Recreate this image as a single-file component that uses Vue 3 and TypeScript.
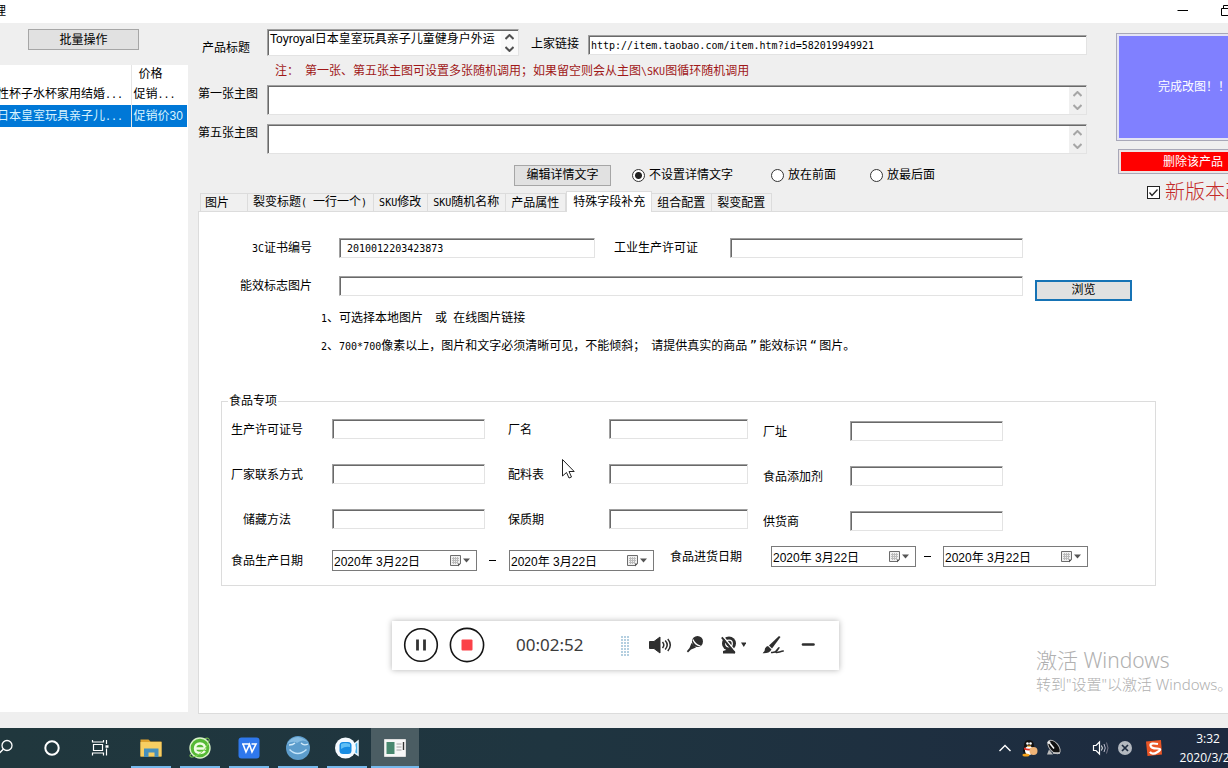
<script setup lang="ts">
import { ref } from 'vue'

interface Product { name: string; price: string }
interface Part { t: string; hw?: boolean }
interface Field { id: string; label: string }

const products: Product[] = [
  { name: '性杯子水杯家用结婚', price: '促销...' },
  { name: '日本皇室玩具亲子儿', price: '促销价30' },
]
const selectedRow = ref(1)

const title = ref('Toyroyal日本皇室玩具亲子儿童健身户外运')
const link = ref('http://item.taobao.com/item.htm?id=582019949921')
const firstImage = ref('')
const fifthImage = ref('')

const placements = ['不设置详情文字', '放在前面', '放最后面']
const placement = ref(0)
const newVersion = ref(true)

const tabs: Part[][] = [
  [{ t: '图片' }],
  [{ t: '裂变标题' }, { t: '( ', hw: true }, { t: '一行一个' }, { t: ')', hw: true }],
  [{ t: 'SKU', hw: true }, { t: '修改' }],
  [{ t: 'SKU', hw: true }, { t: '随机名称' }],
  [{ t: '产品属性' }],
  [{ t: '特殊字段补充' }],
  [{ t: '组合配置' }],
  [{ t: '裂变配置' }],
]
const activeTab = ref(5)

const certificate = ref('2010012203423873')

const foodColumns: Field[][] = [
  [
    { id: 'permit', label: '生产许可证号' },
    { id: 'contact', label: '厂家联系方式' },
    { id: 'storage', label: '储藏方法' },
  ],
  [
    { id: 'factory', label: '厂名' },
    { id: 'recipe', label: '配料表' },
    { id: 'shelf', label: '保质期' },
  ],
  [
    { id: 'address', label: '厂址' },
    { id: 'additive', label: '食品添加剂' },
    { id: 'supplier', label: '供货商' },
  ],
]
const dateGroups = [
  { id: 'produced', label: '食品生产日期' },
  { id: 'stocked', label: '食品进货日期' },
]
const today = '2020年 3月22日'
</script>

<template>
  <div class="screen">
    <header class="titlebar">
      <span class="caption">理</span>
      <div class="window-buttons">
        <button type="button" aria-label="最小化">
          <svg width="12" height="12"><path d="M0.5 6.5H11" stroke="#000" fill="none" /></svg>
        </button>
        <button type="button" aria-label="还原">
          <svg width="12" height="12"><path d="M0.5 4.5h8v7h-8zM2.5 4.5v-3h8v7h-2" stroke="#000" fill="none" /></svg>
        </button>
      </div>
    </header>

    <main class="body">
      <aside class="left">
        <button type="button" class="btn batch">批量操作</button>
        <div class="list">
          <table>
            <thead>
              <tr><th></th><th class="price-head">价格</th></tr>
            </thead>
            <tbody>
              <tr v-for="(p, i) in products" :key="i" :class="{ selected: i === selectedRow }" @click="selectedRow = i">
                <td>{{ p.name }}<span class="hw">...</span></td>
                <td v-if="i === 0">促销<span class="hw">...</span></td>
                <td v-else>{{ p.price }}</td>
              </tr>
            </tbody>
          </table>
        </div>
      </aside>

      <section class="right">
        <div class="top">
          <form class="head-form" @submit.prevent>
            <div class="row first-row">
              <label class="lead low" for="title">产品标题</label>
              <div class="memo short">
                <textarea id="title" v-model="title" rows="1" wrap="off"></textarea>
                <div class="spin active">
                  <button type="button" aria-label="向上"><svg width="9" height="6"><path d="M0.5 5L4.5 1L8.5 5" /></svg></button>
                  <button type="button" aria-label="向下"><svg width="9" height="6"><path d="M0.5 1L4.5 5L8.5 1" /></svg></button>
                </div>
              </div>
              <label class="link-label" for="link">上家链接</label>
              <input id="link" v-model="link" class="field mono grow" type="text" />
            </div>
            <p class="notice">注：<span class="hw">&nbsp;</span>第一张、第五张主图可设置多张随机调用；如果留空则会从主图<span class="hw">\SKU</span>图循环随机调用</p>
            <div class="row memo-row">
              <label class="lead" for="img1">第一张主图</label>
              <div class="memo grow">
                <textarea id="img1" v-model="firstImage"></textarea>
                <div class="spin">
                  <button type="button" aria-label="向上"><svg width="9" height="6"><path d="M0.5 5L4.5 1L8.5 5" /></svg></button>
                  <button type="button" aria-label="向下"><svg width="9" height="6"><path d="M0.5 1L4.5 5L8.5 1" /></svg></button>
                </div>
              </div>
            </div>
            <div class="row memo-row">
              <label class="lead" for="img5">第五张主图</label>
              <div class="memo grow">
                <textarea id="img5" v-model="fifthImage"></textarea>
                <div class="spin">
                  <button type="button" aria-label="向上"><svg width="9" height="6"><path d="M0.5 5L4.5 1L8.5 5" /></svg></button>
                  <button type="button" aria-label="向下"><svg width="9" height="6"><path d="M0.5 1L4.5 5L8.5 1" /></svg></button>
                </div>
              </div>
            </div>
            <div class="row detail-row">
              <button type="button" class="btn edit">编辑详情文字</button>
              <label v-for="(p, i) in placements" :key="p" class="radio">
                <input v-model="placement" type="radio" name="placement" :value="i" />{{ p }}
              </label>
            </div>
          </form>

          <div class="side">
            <button type="button" class="big finish">完成改图！！</button>
            <button type="button" class="big remove">删除该产品</button>
            <label class="version">
              <input v-model="newVersion" type="checkbox" />
              <svg v-if="newVersion" class="tick" width="13" height="13"><path d="M2.5 6.5L5 9.500L10.500 3.500" stroke="#222" stroke-width="1.3" fill="none" /></svg>
              <span>新版本改图</span>
            </label>
          </div>
        </div>

        <div class="tabs" role="tablist">
          <button
            v-for="(tab, i) in tabs" :key="i" type="button" role="tab"
            :aria-selected="i === activeTab" :class="{ current: i === activeTab }" @click="activeTab = i"
          ><span v-for="(part, j) in tab" :key="j" :class="{ hw: part.hw }">{{ part.t }}</span></button>
        </div>

        <div class="panel" role="tabpanel">
          <div class="upper">
            <div class="fields">
              <label for="ccc"><span class="hw">3C</span>证书编号</label>
              <input id="ccc" v-model="certificate" class="field mono indent" type="text" />
              <label class="mid" for="industry">工业生产许可证</label>
              <input id="industry" class="field" type="text" />
              <label for="energy">能效标志图片</label>
              <input id="energy" class="field wide" type="text" />
            </div>
            <button type="button" class="btn browse">浏览</button>
          </div>
          <div class="notes">
            <p><span class="hw">1</span>、可选择本地图片<span class="hw">&nbsp; </span>或<span class="hw">&nbsp;</span>在线图片链接</p>
            <p><span class="hw">2</span>、<span class="hw">700*700</span>像素以上，图片和文字必须清晰可见，不能倾斜；<span class="hw">&nbsp;</span>请提供真实的商品<span class="hw quote">”</span>能效标识<span class="hw quote">“</span>图片。</p>
          </div>

          <fieldset class="food">
            <legend>食品专项</legend>
            <div class="columns">
              <div v-for="(column, c) in foodColumns" :key="c" class="column" :class="'column-' + c">
                <template v-for="f in column" :key="f.id">
                  <label :for="f.id">{{ f.label }}</label>
                  <input :id="f.id" class="field" type="text" />
                </template>
              </div>
            </div>
            <div class="dates">
              <div v-for="g in dateGroups" :key="g.id" class="date-group" :class="g.id">
                <label :for="g.id">{{ g.label }}</label>
                <template v-for="n in 2" :key="n">
                  <span v-if="n === 2" class="dash"></span>
                  <div class="date">
                    <input :id="n === 1 ? g.id : g.id + '-end'" type="text" :value="today" :aria-label="g.label" readonly />
                    <button type="button" aria-label="选择日期">
                      <svg width="22" height="13" viewBox="0 0 22 13">
                        <path d="M1.500 1.500h10v8l-2 2h-8z" fill="#f0f0f0" stroke="#6c6c6c" />
                        <path d="M3 4.500h7M3 6.500h7M3 8.500h6M4.500 3v7M6.500 3v7M8.500 3v7" stroke="#bbb" fill="none" />
                        <path d="M9 12.500V9.500H12z" fill="#555" />
                        <path d="M14 4.500h7l-3.500 4z" fill="#555" />
                      </svg>
                    </button>
                  </div>
                </template>
              </div>
            </div>
          </fieldset>
        </div>
      </section>
    </main>

    <div class="watermark">
      <strong>激活 Windows</strong>
      <span>转到"设置"以激活 Windows。</span>
    </div>

    <svg class="pointer" width="13" height="20" viewBox="0 0 13 20">
      <path d="M0.500 0.500V17L4.500 13.500L7 19L9.500 18L7 12.500H12.200Z" fill="#fff" stroke="#222" />
    </svg>

    <div class="recorder">
      <button type="button" aria-label="暂停">
        <svg width="36" height="36" viewBox="0 0 36 36"><circle cx="18" cy="18" r="16.300" fill="#fff" stroke="#151515" stroke-width="1.600" /><path d="M14.500 12.500v11M21.500 12.500v11" stroke="#333" stroke-width="2.800" /></svg>
      </button>
      <button type="button" class="stop" aria-label="停止">
        <svg width="36" height="36" viewBox="0 0 36 36"><circle cx="18" cy="18" r="16.600" fill="#fff" stroke="#151515" stroke-width="1.600" /><rect x="12.500" y="12.500" width="11" height="11" rx="1" fill="#fb4148" /></svg>
      </button>
      <time>00:02:52</time>
      <span class="grip"></span>
      <button type="button" class="tool" aria-label="声音">
        <svg width="24" height="20" viewBox="0 0 24 20"><path d="M1.500 6.500H6L12 2v16L6 13.500H1.500z" fill="#2e2e2e" stroke="#2e2e2e" stroke-linejoin="round" /><path d="M14.500 7q2.600 3 0 6M17.200 5.500q4 4.500 0 9M19.800 4q5 6 0 12" fill="none" stroke="#2e2e2e" stroke-width="1.500" /></svg>
      </button>
      <button type="button" class="tool mic" aria-label="麦克风">
        <svg width="18" height="20" viewBox="0 0 18 20"><circle cx="11.500" cy="6.500" r="5.500" fill="#2e2e2e" /><path d="M7 4.500q1.500 5 7.500 6.500" fill="none" stroke="#fff" stroke-width="1.200" /><path d="M5.500 8L10 12.500L5 14.500L2 17.500L0.800 16.300L3.500 13z" fill="#2e2e2e" /></svg>
      </button>
      <button type="button" class="tool cam" aria-label="摄像头">
        <svg width="26" height="20" viewBox="0 0 26 20"><circle cx="9" cy="8.500" r="7" fill="#2e2e2e" /><circle cx="9" cy="8.500" r="3.300" fill="none" stroke="#fff" stroke-width="1.300" /><path d="M3 16q6-3 12 0v2.500h-12z" fill="#2e2e2e" /><path d="M3.300 1.800l13 15.500" stroke="#fff" stroke-width="1.500" /><path d="M1.800 2.300l13 15.500" stroke="#2e2e2e" stroke-width="1.900" /><path d="M21 7.500h5.500l-2.700 4.500z" fill="#2e2e2e" /></svg>
      </button>
      <button type="button" class="tool brush" aria-label="画笔">
        <svg width="22" height="20" viewBox="0 0 22 20"><path d="M17 1L7 10.500L10 13.500L18.500 2z" fill="#2e2e2e" /><path d="M6 11L9.500 14.500Q7 18.800 0.500 18.300Q3.300 16.500 3 13.500Q4 11 6 11z" fill="#2e2e2e" /><path d="M9 17.500Q13 18 15 15.500T17 12.800T14.500 15.500T17.500 17T21.500 16" fill="none" stroke="#2e2e2e" stroke-width="1.500" /></svg>
      </button>
      <button type="button" class="tool" aria-label="收起">
        <svg width="14" height="20" viewBox="0 0 14 20"><path d="M2 9.500h10.500" stroke="#2e2e2e" stroke-width="2.600" stroke-linecap="round" /></svg>
      </button>
    </div>

    <footer class="taskbar">
      <nav class="system" aria-label="系统">
        <button type="button" aria-label="搜索"><svg width="18" height="18" viewBox="0 0 18 18"><circle cx="12" cy="6.500" r="5" fill="none" stroke="#fff" stroke-width="1.300" /><path d="M8.500 10L2.500 16" stroke="#fff" stroke-width="1.400" /></svg></button>
        <button type="button" aria-label="语音助手"><svg width="18" height="18" viewBox="0 0 18 18"><circle cx="9" cy="9" r="6.700" fill="none" stroke="#fff" stroke-width="2" /></svg></button>
        <button type="button" aria-label="任务视图"><svg width="18" height="18" viewBox="0 0 18 18" fill="none" stroke="#fff" stroke-width="1.200"><path d="M2.500 5.500h9v6h-9zM1.500 1v2h11V1M1.500 16.500v-2.500h11v2.500M15.500 1v4M15.500 9.500v7" /><path d="M14.500 7.500h3" stroke-width="2.500" /></svg></button>
      </nav>
      <nav class="apps" aria-label="应用">
        <button type="button" aria-label="文件夹"><svg width="24" height="24" viewBox="0 0 24 24"><path d="M1.500 3.500h8l2 2h11v15h-21z" fill="#dfa22e" /><path d="M1.500 6h21v14.500h-21z" fill="#f8ce62" /><path d="M5 12.500h14.500V21H15.500v-4.500h-6V21H5z" fill="#4790bd" /></svg></button>
        <button type="button" aria-label="浏览器"><svg width="24" height="24" viewBox="0 0 24 24"><circle cx="12" cy="12" r="10" fill="#55b936" stroke="#d9f2c9" stroke-width="1.400" /><path d="M7 12.500h10q0-5-5-5t-5 5q0 4.500 5 4.500q3.500 0 5-2" fill="none" stroke="#effce3" stroke-width="2.400" /><path d="M2.500 18Q0 23 8 20Q18 15 21 5Q22 1 17 2.500" fill="none" stroke="#84d654" /></svg></button>
        <button type="button" aria-label="文档"><svg width="24" height="24" viewBox="0 0 24 24"><rect x="1.500" y="1.500" width="21" height="21" rx="3" fill="#2f78ec" /><path d="M5 8h7.500M6 8L9 16L12.500 8.500L15 16L19 8H14.500" fill="none" stroke="#fff" stroke-width="1.600" /></svg></button>
        <button type="button" aria-label="助手"><svg width="26" height="26" viewBox="0 0 26 26"><circle cx="13" cy="13" r="12" fill="#5d9dcc" /><path d="M2 9Q8 5 12 8Q18 3 24 8Q19 3 13 2Q6 2 2 9z" fill="#86bce2" /><path d="M4 10q4 0 6-2M16 8q3 3 7 1" fill="none" stroke="#d2ebfa" stroke-width="1.300" /><path d="M4.500 14.500q8 8 17 0" fill="none" stroke="#c5e5fa" stroke-width="1.500" /></svg></button>
        <button type="button" aria-label="录屏"><svg width="26" height="24" viewBox="0 0 26 24"><path d="M18 10L24 5v14l-6-4z" fill="#4ab1eb" stroke="#e9f6ff" stroke-width="1.500" /><circle cx="11.500" cy="12" r="10.500" fill="#f5faff" /><rect x="5.500" y="6" width="12" height="12" rx="3.500" fill="#178ce2" /><path d="M7 8q4-2 9 0v3q-5-1-9 2z" fill="#60bff5" /></svg></button>
        <button type="button" class="running" aria-label="产品管理"><svg width="24" height="20" viewBox="0 0 24 20"><path d="M1.500 1.500h21v17h-21z" fill="#f7f7f7" stroke="#ddd" /><path d="M3.500 4h8v12h-8z" fill="#49886f" /><path d="M13.500 6h5M13.500 9h5M13.500 12h5" stroke="#a4a4a4" /><path d="M20.500 4v8" stroke="#333" stroke-width="1.400" /></svg></button>
      </nav>
      <div class="tray">
        <button type="button" class="t-up" aria-label="显示隐藏的图标"><svg width="14" height="10"><path d="M1.500 8L7 2.500L12.500 8" fill="none" stroke="#fff" stroke-width="1.400" /></svg></button>
        <button type="button" class="t-qq" aria-label="聊天"><svg width="18" height="18" viewBox="0 0 18 18"><path d="M3 7Q3 1 8 1T13 7L15 12Q13 16 8 16T2 12z" fill="#111" /><ellipse cx="8" cy="11.500" rx="4" ry="4.500" fill="#fff" /><circle cx="6.500" cy="4.500" r="1.300" fill="#fff" /><circle cx="9.500" cy="4.500" r="1.300" fill="#fff" /><path d="M5.500 6.500h5l-2.500 1.500z" fill="#f6a21b" /><path d="M3 8.500q5 2.500 10 0v2q-5 2-10 0z" fill="#e22f24" /><circle cx="12.500" cy="12" r="4" fill="#efb477" /><ellipse cx="5" cy="16" rx="3.500" ry="1.500" fill="#f6a21b" /></svg></button>
        <button type="button" class="t-dish" aria-label="网络"><svg width="18" height="18" viewBox="0 0 18 18"><ellipse cx="9" cy="8" rx="8" ry="4.500" transform="rotate(50 9 8)" fill="#111" stroke="#bbb" /><path d="M5 4.500l4 5" stroke="#fff" stroke-width="1.500" /><circle cx="4" cy="3.500" r="1.500" fill="#eee" /><path d="M4 10.500l4 5H2z" fill="#bbb" /><path d="M8 14h7" stroke="#ccc" stroke-width="1.500" /></svg></button>
        <button type="button" class="t-vol" aria-label="音量"><svg width="18" height="16" viewBox="0 0 18 16" fill="none" stroke="#fff"><path d="M1.500 5.500H4L7.500 2v12L4 10.500H1.500z" stroke-width="1.200" /><path d="M9.500 5.500q1.700 2.500 0 5" /><path d="M12 4q2.500 4 0 8" stroke="#bbc" /><path d="M14.500 2.500q3 5.500 0 11" stroke="#778" /></svg></button>
        <button type="button" class="t-x" aria-label="输入法停用"><svg width="14" height="14" viewBox="0 0 14 14"><circle cx="7" cy="7" r="7" fill="#b3b8bf" /><path d="M4 4l6 6M10 4l-6 6" stroke="#1d2a3e" stroke-width="1.700" /></svg></button>
        <button type="button" class="t-s" aria-label="输入法"><svg width="18" height="18" viewBox="0 0 18 18"><path d="M1 2.500L16 1L17 15.500L2.500 17z" fill="#ea5525" /><path d="M13 5Q5 3.500 5.500 6.500T12 9.500T12.500 13T5 12.800" fill="none" stroke="#fff" stroke-width="2.200" /></svg></button>
        <div class="clock"><span>3:32</span><span>2020/3/22</span></div>
      </div>
    </footer>
  </div>
</template>

<style>
html, body { margin: 0; overflow: hidden; }
</style>

<style scoped>
.screen {
  position: relative;
  display: flex;
  flex-direction: column;
  min-height: 100vh;
  overflow: hidden;
  background: #efefef;
  color: #000;
  font: 12px/14px "Liberation Sans", "Noto Sans CJK SC", sans-serif;
  white-space: nowrap;
}
.screen * { box-sizing: border-box; }
button, input, textarea { font: inherit; color: inherit; }
button { padding: 0; border: 0; background: none; }
svg { display: block; }
p { margin: 0; }
.hw, .mono { font-family: "DejaVu Sans Mono", monospace; font-size: 10px; white-space: pre; }
.hw.quote { display: inline-block; width: 12px; text-align: center; font-size: 12px; line-height: 12px; }
.grow { flex: 1; min-width: 0; }

.titlebar { display: flex; justify-content: space-between; height: 23px; background: #fff; }
.caption { margin: 4px 0 0 -6px; }
.window-buttons { display: flex; gap: 32px; margin: 4px -5px 0 0; height: 12px; }

.body { display: flex; flex: 1; }
.left { display: flex; flex-direction: column; width: 188px; padding: 6px 0 16px; }
.btn { border: 1px solid #a6a6a6; background: #e1e1e1; text-align: center; }
.batch { width: 111px; height: 21px; margin: 0 0 15px 28px; }
.list { flex: 1; overflow: hidden; background: #fff; }
table { width: 195px; margin-left: -8px; border-collapse: collapse; table-layout: fixed; }
th, td { height: 22px; padding: 0 0 0 5px; font-weight: normal; text-align: left; }
th { height: 18px; }
th:first-child { width: 139px; }
th:last-child, td:last-child { border-left: 1px solid #e5e5e5; padding-left: 2px; }
th.price-head { padding-left: 7px; }
tr.selected { background: #0078d7; color: #d8f4ff; }

.right { display: flex; flex: 1; flex-direction: column; min-width: 0; padding: 0 0 14px 10px; }
.top { display: flex; gap: 29px; height: 167px; }
.head-form { flex: 1; min-width: 0; padding-top: 6px; }
.row { display: flex; }
.lead { width: 69px; padding-top: 2px; }
.low { padding: 12px 0 0 4px; }
.first-row { height: 34px; }
.field {
  min-width: 0;
  height: 20px;
  padding: 0 1px;
  border: 1px solid;
  border-color: #a0a0a0 #e3e3e3 #e3e3e3 #a0a0a0;
  border-radius: 0;
  outline: 0;
  background: #fff;
  box-shadow: inset 1px 1px #696969;
}
.field.mono { font-size: 10px; }
#link { margin-top: 6px; padding: 0 2px; }
.link-label { width: 69px; padding: 8px 0 0 12px; }
.memo {
  display: flex;
  border: 1px solid;
  border-color: #a0a0a0 #e3e3e3 #e3e3e3 #a0a0a0;
  background: #fff;
  box-shadow: inset 1px 1px #696969;
}
.memo.short { width: 252px; height: 27px; }
textarea {
  flex: 1;
  min-width: 0;
  padding: 2px 0 0 2px;
  border: 0;
  outline: 0;
  resize: none;
  background: none;
  overflow: hidden;
}
.spin { display: flex; flex-direction: column; justify-content: space-around; width: 17px; margin-top: 1px; padding-left: 4px; background: #f0f0f0; }
.spin svg { fill: none; stroke: #a6a6a6; stroke-width: 2; }
.spin.active { background: #fafafa; }
.spin.active svg { stroke: #505050; }
.notice { height: 22px; padding-left: 77px; color: #a01818; line-height: 16px; }
.memo-row { height: 39px; }
.memo-row .memo { height: 30px; }
.detail-row { align-items: center; height: 24px; padding-left: 316px; }
.edit { width: 97px; height: 21px; margin-right: 21px; }
.radio { display: flex; align-items: center; margin-right: 38px; }
.radio:nth-of-type(2) { margin-right: 34px; }
.radio input {
  appearance: none;
  width: 13px;
  height: 13px;
  margin: 0 4px 0 0;
  border: 1px solid #333;
  border-radius: 50%;
  background: #fff;
}
.radio input:checked { background: radial-gradient(circle, #222 0 3px, #fff 4px); }

.side { width: 112px; padding-top: 10px; }
.big { display: block; border: 1px solid #a8a8b8; background-clip: content-box; color: #fff; text-align: center; }
.finish { width: 156px; height: 108px; padding: 2px; background-color: #8080ff; box-shadow: inset 0 0 0 2px #e4e4f4; }
.remove { width: 150px; height: 25px; margin: 8px 0 0 2px; padding: 2px; background-color: #ff0000; box-shadow: inset 0 0 0 2px #ece4e4; }
.version { position: relative; display: flex; align-items: center; height: 28px; margin: 4px 0 0 31px; color: #c42a2a; font-size: 20px; font-weight: 300; }
.version input { appearance: none; flex: none; width: 13px; height: 13px; margin: 0 5px 0 0; border: 1px solid #222; background: #fff; }
.tick { position: absolute; left: 0; top: 8px; }

.tabs { display: flex; align-items: flex-end; height: 21px; padding-left: 2px; }
.tabs button { height: 18px; padding: 0 6px 0 5px; border: 1px solid #dcdcdc; border-width: 1px 1px 0 0; background: #f0f0f0; line-height: 14px; }
.tabs button:first-child { width: 48px; border-left-width: 1px; padding-left: 4px; text-align: left; }
.tabs .current { position: relative; height: 21px; margin-bottom: -1px; padding: 0 6px; border-left-width: 1px; background: #fff; }
.panel { flex: 1; padding: 26px 72px 0 22px; border: 1px solid #dcdcdc; border-right: 0; background: #fff; }
.upper { display: flex; gap: 12px; padding-right: 24px; }
.fields {
  display: grid;
  flex: 1;
  grid-template-columns: 91px 27px 256px 135px 1fr;
  grid-auto-rows: 20px;
  row-gap: 18px;
}
.fields label { padding-top: 3px; text-align: right; }
.fields label:nth-of-type(odd) { grid-column: 1; }
.fields label.mid { grid-column: 4; padding-right: 32px; }
#ccc { grid-column: 3; }
#industry { grid-column: 5; }
.fields .wide { grid-column: 3 / 6; }
.indent { padding-left: 7px; }
.browse { align-self: flex-end; width: 97px; height: 21px; margin-bottom: -5px; border: 2px solid #1673b5; line-height: 15px; }
.notes { display: flex; flex-direction: column; gap: 14px; padding: 15px 0 0 100px; }
.notes p { height: 14px; }

.food { min-width: 0; margin: 41px 0 0; padding: 11px 0 14px; border: 1px solid #dcdcdc; }
.food legend { margin-left: 6px; padding: 0 1px; }
.columns { display: flex; }
.column { display: grid; grid-auto-rows: 20px; row-gap: 25px; align-content: start; }
.column label { padding-top: 4px; }
.column-0 { grid-template-columns: 110px 153px; }
.column-0 label { padding-right: 20px; text-align: center; }
.column-1 { grid-template-columns: 124px 139px; }
.column-1 label { padding-left: 23px; }
.column-2 { grid-template-columns: 102px 153px; padding-top: 2px; }
.column-2 label { padding-left: 15px; }
.dates { display: flex; align-items: flex-start; gap: 16px; padding: 15px 0 0 9px; }
.date-group { display: flex; align-items: center; }
.date-group label { width: 101px; }
.produced { padding-top: 4px; }
.date { display: flex; align-items: center; width: 145px; height: 21px; border: 1px solid #7a7a7a; background: #fff; }
.date input { flex: 1; min-width: 0; height: 19px; padding: 0 0 0 1px; border: 0; outline: 0; background: none; }
.date button { margin-right: 5px; }
.dash { width: 7px; height: 1px; margin: 0 13px 0 12px; background: #000; }
.stocked .dash { margin: 0 12px 0 8px; }

.watermark { position: absolute; left: 1036px; bottom: 75px; display: flex; flex-direction: column; gap: 3px; color: #b0b0b0; font-family: "Noto Sans", "Noto Sans CJK SC", sans-serif; }
.watermark strong { font-weight: 300; font-size: 21px; line-height: 24px; }
.watermark span { font-size: 15px; line-height: 18px; font-weight: 300; }
.pointer { position: absolute; left: 562px; top: 459px; }

.recorder { position: absolute; left: 392px; bottom: 98px; display: flex; align-items: center; width: 447px; height: 49px; padding: 0 0 1px 11px; background: #fff; box-shadow: 0 0 6px rgba(0, 0, 0, 0.3); }
.recorder time { margin: 0 38px 0 31px; color: #3c3c3c; font: 17px/22px "Noto Sans", sans-serif; }
.stop { margin-left: 10px; }
.grip { width: 9px; height: 21px; margin-right: 18px; background: repeating-linear-gradient(#fff 0 1px, transparent 1px 3px), repeating-linear-gradient(90deg, #b4cfe0 0 2px, #fff 2px 3px); }
.mic { margin-left: 14px; }
.cam { margin-left: 16px; }
.brush { margin: 0 17px 0 16px; }

.taskbar { display: flex; height: 40px; background: linear-gradient(90deg, #20373d, #1f3540 45%, #1d2a40); }
.system { display: flex; margin: 0 2px 0 -20px; }
.system button { display: grid; place-items: center; width: 48px; }
.apps { display: flex; }
.apps button { display: grid; place-items: center; width: 49px; background: linear-gradient(#76b9ed, #76b9ed) center bottom / 40px 2px no-repeat; }
.apps .running { width: 48px; background: linear-gradient(#76b9ed, #76b9ed) center bottom / 48px 2px no-repeat #4b5d63; }
.tray { display: flex; align-items: center; margin-left: auto; }
.tray button { margin-right: 6px; }
.tray .t-up { margin-right: 9px; }
.tray .t-dish { margin-right: 29px; }
.tray .t-vol { margin-right: 8px; }
.tray .t-x { margin-right: 13px; }
.tray .t-s { margin-right: 15px; }
.clock { display: flex; flex-direction: column; align-items: center; width: 60px; margin-right: -10px; color: #fff; font: 12px/19px "Open Sans", sans-serif; }
</style>
